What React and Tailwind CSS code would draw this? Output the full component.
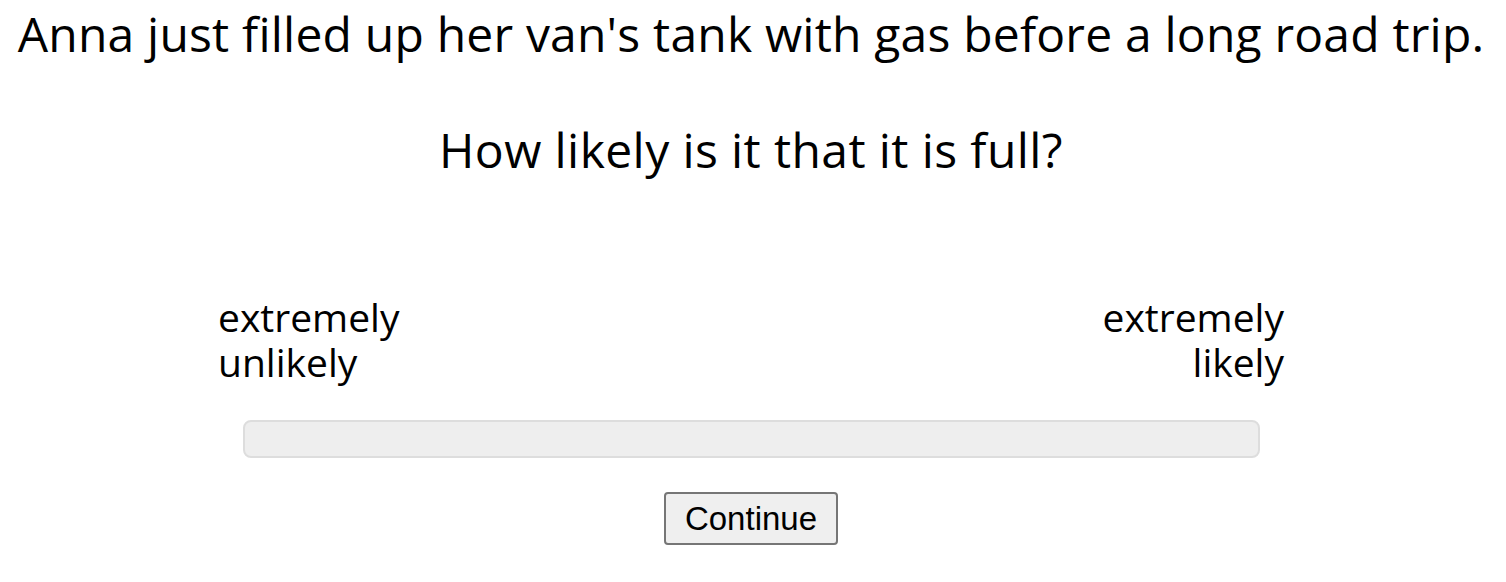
import React from 'react';

const App = () => {
    return (
        <div className="w-[1502px] h-[582px] bg-white text-black overflow-hidden flex flex-col items-center" style={{ fontFamily: '"Open Sans", sans-serif' }}>
            <p className="text-[48px] leading-[56px] mt-[6px] tracking-[0.2px] whitespace-nowrap">
                Anna just filled up her van's tank with gas before a long road trip.
            </p>
            <p className="text-[48px] leading-[56px] mt-[60px] tracking-[0.4px] whitespace-nowrap">
                How likely is it that it is full?
            </p>
            <div className="w-[1066px] mt-[116px] flex justify-between text-[39px] leading-[45px]">
                <div className="text-left flex flex-col">
                    <span>extremely</span>
                    <span>unlikely</span>
                </div>
                <div className="text-right flex flex-col">
                    <span>extremely</span>
                    <span>likely</span>
                </div>
            </div>
            <div className="w-[1017px] h-[38px] mt-[36px] rounded-[8px] border-2 border-[#dddddd] bg-[#eeeeee]"></div>
            <button
                className="mt-[34px] w-[174px] h-[53px] rounded-[4px] border-2 border-[#767676] bg-[#efefef] text-[33px]"
                style={{ fontFamily: '"Liberation Sans", Arial, sans-serif' }}
            >
                Continue
            </button>
        </div>
    );
};

export default App;
